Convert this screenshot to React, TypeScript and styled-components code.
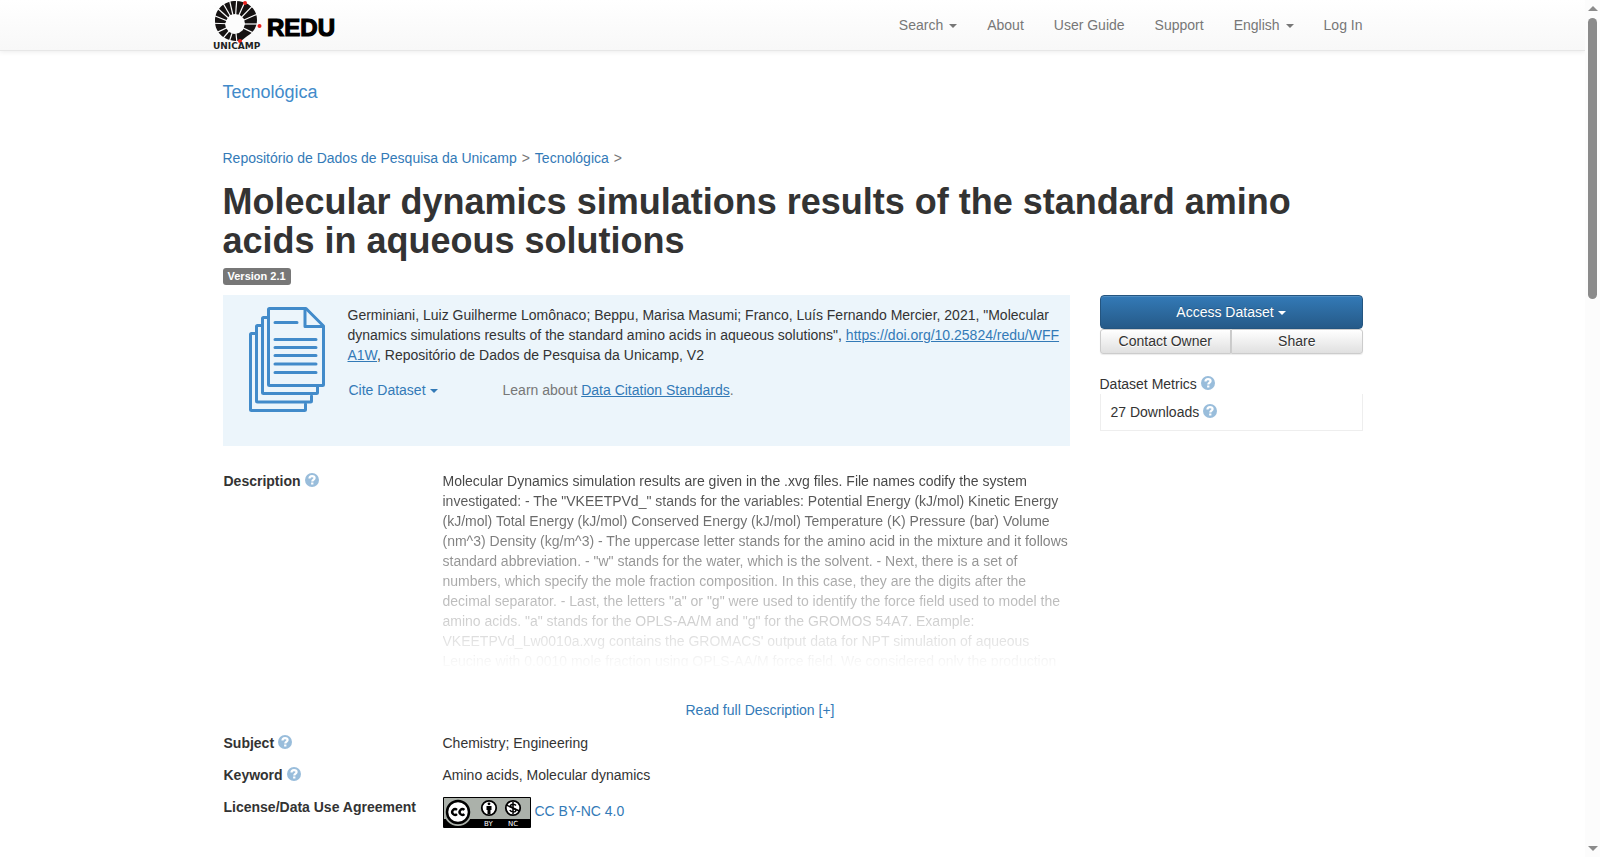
import React from "react";
import styled, { createGlobalStyle, css } from "styled-components";

const GlobalStyle = createGlobalStyle`
  *, *::before, *::after { box-sizing: border-box; }
  html, body { margin: 0; padding: 0; }
  html { overflow: hidden; height: 100%; }
  body {
    font-family: "Liberation Sans", Arial, sans-serif;
    font-size: 14px;
    line-height: 20px;
    color: #333;
    background: #fff;
  }
  button { font: inherit; color: inherit; cursor: pointer; }
`;

const Shell = styled.div`
  display: grid;
  grid-template-columns: minmax(0, 1fr) 15px;
  height: 100vh;
  overflow: hidden;
`;

const Page = styled.div`
  min-width: 0;
`;

const Track = styled.div`
  display: flex;
  flex-direction: column;
  align-items: center;
  background: #fcfcfc;
  padding: 6px 0;
`;

const Thumb = styled.div`
  width: 9px;
  flex: 0 0 281px;
  margin-top: 7px;
  border-radius: 5px;
  background: #8b8b8b;
`;

const Arrow = styled.span<{ $down?: boolean }>`
  border-left: 5px solid transparent;
  border-right: 5px solid transparent;
  ${(p) =>
    p.$down
      ? css`
          margin-top: auto;
          border-top: 5px solid #8b8b8b;
        `
      : css`
          border-bottom: 5px solid #8b8b8b;
        `}
`;

const Header = styled.header`
  height: 51px;
  background: linear-gradient(#fff, #f8f8f8);
  border-bottom: 1px solid #e7e7e7;
  box-shadow: 0 1px 5px rgba(0, 0, 0, 0.08);
`;

const Container = styled.div`
  max-width: 1170px;
  margin: 0 auto;
`;

const NavRow = styled(Container)`
  display: flex;
  justify-content: space-between;
  height: 50px;
`;

const Brand = styled.a`
  display: block;
  padding-left: 5px;
  height: 50px;
`;

const NavList = styled.nav`
  display: flex;
`;

const navItem = css`
  padding: 15px;
  border: 0;
  background: none;
  color: #777;
  text-decoration: none;
  line-height: 20px;
`;

const NavLink = styled.a`
  ${navItem}
`;

const NavButton = styled.button`
  ${navItem}
`;

const Caret = styled.span<{ $tight?: boolean }>`
  display: inline-block;
  margin-left: ${(p) => (p.$tight ? 4 : 6)}px;
  vertical-align: middle;
  border-top: 4px solid currentColor;
  border-left: 4px solid transparent;
  border-right: 4px solid transparent;
`;

const Main = styled(Container).attrs({ as: "main" })`
  padding: 0 15px;
`;

const Link = styled.a<{ $underline?: boolean }>`
  color: #337ab7;
  text-decoration: ${(p) => (p.$underline ? "underline" : "none")};
`;

const Collection = styled.a`
  display: block;
  margin-top: 31px;
  font-size: 18px;
  color: #428bca;
  text-decoration: none;
`;

const Breadcrumb = styled.nav`
  display: flex;
  gap: 5px;
  margin-top: 46px;
  color: #777;
`;

const Title = styled.h1`
  margin: 14px 0 0;
  font-size: 36px;
  line-height: 39px;
  font-weight: bold;
`;

const VersionLabel = styled.span`
  display: block;
  width: fit-content;
  margin-top: 8px;
  padding: 0 5px;
  border-radius: 3px;
  background: #777;
  color: #fff;
  font-size: 11px;
  line-height: 17px;
  font-weight: bold;
`;

const Columns = styled.div`
  display: grid;
  grid-template-columns: minmax(0, 1fr) 263px;
  gap: 30px;
  margin-top: 10px;
`;

const Citation = styled.section`
  display: grid;
  grid-template-columns: 76px minmax(0, 1fr);
  gap: 23px;
  min-height: 151px;
  padding: 10px 10px 0 26px;
  background: #ecf5fb;

  > svg {
    margin-top: 2px;
  }
`;

const CitationText = styled.p`
  margin: 0;

  a {
    word-break: break-all;
  }
`;

const CitationActions = styled.div`
  display: flex;
  gap: 65px;
  margin-top: 15px;
  color: #777;
`;

const LinkButton = styled.button`
  padding: 0 0 0 1px;
  border: 0;
  background: none;
  color: #337ab7;
`;

const Actions = styled.div`
  display: flex;
  flex-wrap: wrap;
`;

const AccessButton = styled.button`
  flex: 0 0 100%;
  height: 34px;
  border: 1px solid #245580;
  border-radius: 4px;
  background: linear-gradient(#337ab7, #265a88);
  color: #fff;
  text-shadow: 0 -1px 0 rgba(0, 0, 0, 0.2);
  box-shadow: inset 0 1px 0 rgba(255, 255, 255, 0.15);
`;

const SmallButton = styled.button<{ $side: "left" | "right" }>`
  flex: 1;
  height: 25px;
  padding: 0 0 2px;
  border: 1px solid #ccc;
  border-radius: ${(p) => (p.$side === "left" ? "3px 0 0 3px" : "0 3px 3px 0")};
  background: linear-gradient(#fff, #e0e0e0);
  text-shadow: 0 1px 0 #fff;
  box-shadow: 0 1px 1px rgba(0, 0, 0, 0.08);
`;

const MetricsTitle = styled.div`
  margin-top: 20px;
`;

const MetricsBody = styled.div`
  padding: 8px 10px;
  border: 1px solid #eee;
  border-top: 0;
`;

const HelpSvg = styled.svg`
  margin-left: 4px;
  vertical-align: -1px;
`;

const Fields = styled.dl`
  display: grid;
  grid-template-columns: 190px minmax(0, 1fr);
  column-gap: 30px;
  row-gap: 12px;
  margin: 25px 0 0;
`;

const Term = styled.dt`
  padding-left: 1px;
  font-weight: bold;
  white-space: nowrap;
`;

const Detail = styled.dd`
  margin: 0;
`;

const Faded = styled.div`
  height: 195px;
  overflow: hidden;
  mask-image: linear-gradient(rgba(0, 0, 0, 0.95), rgba(0, 0, 0, 0.02));
`;

const ReadMore = styled.button`
  display: block;
  margin: 34px auto 1px;
  padding: 0 0 0 8px;
  border: 0;
  background: none;
  color: #337ab7;
`;

const LicenseRow = styled(Detail)`
  display: flex;
  gap: 4px;
  line-height: 28px;
`;

function HelpIcon() {
  return (
    <HelpSvg width="14" height="14" viewBox="0 0 14 14" role="img" aria-label="Help">
      <circle cx="7" cy="7" r="7" fill="#99bddb" />
      <path d="M4.500 5.600C4.500 3.900 5.600 3.200 7 3.200S9.600 3.900 9.600 5.100C9.600 6.600 7.300 6.600 7.300 8.600" fill="none" stroke="#fff" strokeWidth="2.200" />
      <path d="M6.100 9.500h2.300v2H6.100z" fill="#fff" />
    </HelpSvg>
  );
}

const spokes = [-178, -158, -138, -120, -103, -86, -66, -46, -24, 0, 26, 84, 108, 130, 155];

function Logo() {
  return (
    <svg width="124" height="50" viewBox="0 0 124 50" role="img" aria-label="Unicamp REDU">
      <path d="M23 1C35 1 44 9 44 20C44 29 38 34 33 37L28 41C13 42 2 34 2 21C2 9 11 1 23 1z" fill="#151212" />
      <g stroke="#fcfcfc" strokeWidth="1.200">
        {spokes.map((a) => (
          <path key={a} d="M22 24h28" transform={`rotate(${a} 22 24)`} />
        ))}
      </g>
      <path d="M22 14l5 1 4 4 1 5-2 6-4 3-5 1-5-2-3-4-1-4 2-5 3-4z" fill="#fcfcfc" />
      <g fill="#e8201e">
        <circle cx="32" cy="3" r="2" />
        <circle cx="46.500" cy="26" r="2" />
        <circle cx="27" cy="41" r="2" />
      </g>
      <text x="0" y="49" fontFamily="DejaVu Sans, sans-serif" fontWeight="bold" fontSize="9" fill="#222">
        UNICAMP
      </text>
      <text x="54" y="36" fontFamily="Liberation Sans, Arial, sans-serif" fontWeight="bold" fontSize="24" fill="#000" stroke="#000" strokeWidth="1.200">
        REDU
      </text>
    </svg>
  );
}

function DocumentsIcon() {
  return (
    <svg width="76" height="105" viewBox="0 0 76 105" fill="none" stroke="#428bca" strokeWidth="3" strokeLinecap="round" strokeLinejoin="round" aria-hidden="true">
      <path d="M7 26.500H2.500q-1 0-1 1V102.500q0 1 1 1H55.500q1 0 1-1V97" />
      <path d="M13 18.500H8.500q-1 0-1 1V94q0 1 1 1H61.500q1 0 1-1V89" />
      <path d="M19 10.500H14.500q-1 0-1 1V85.500q0 1 1 1H67.500q1 0 1-1V80" />
      <path d="M20.500 1.500H57L74.500 19V77.500q0 1-1 1H20.500q-1 0-1-1V2.500q0-1 1-1z" />
      <path d="M56 2V19.500H74" strokeLinecap="butt" />
      <path d="M26 15.500H48M26 32.500H67M26 40.500H67M26 48.500H67M26 57H67M26 65.500H67" />
    </svg>
  );
}

function LicenseBadge() {
  return (
    <svg width="88" height="31" viewBox="0 0 88 31" role="img" aria-label="CC BY-NC">
      <rect width="88" height="31" rx="1" fill="#000" />
      <path d="M1 1h86v21H1z" fill="#abb1aa" />
      <path d="M1 22h1q4 6 12 7h5q6-2 9-7H1z" fill="#000" />
      <circle cx="15" cy="15" r="14" fill="#abb1aa" />
      <circle cx="15" cy="15" r="11" fill="#fff" stroke="#000" strokeWidth="2.500" />
      <g fill="none" stroke="#000" strokeWidth="2.400">
        <path d="M14 12.800a2.900 2.900 0 1 0 0 4.400M21.400 12.800a2.900 2.900 0 1 0 0 4.400" />
      </g>
      <circle cx="46" cy="11" r="7.200" fill="#fff" stroke="#000" strokeWidth="1.800" />
      <circle cx="46" cy="6.800" r="1.400" fill="#000" />
      <path d="M43.500 9h5v4h-1v4h-3v-4h-1z" fill="#000" />
      <circle cx="70" cy="11" r="7.200" fill="#fff" stroke="#000" strokeWidth="1.800" />
      <path d="M73 8.500C72 7 67.500 6.600 67.500 9S73 11 73 13.300 68 15.300 66.800 13M70 5v12" fill="none" stroke="#000" strokeWidth="1.500" />
      <path d="M63.500 8.200L76.500 14" stroke="#000" strokeWidth="1.400" />
      <g fill="#fff" fontFamily="DejaVu Sans, sans-serif" fontSize="7">
        <text x="41" y="29">BY</text>
        <text x="65" y="29">NC</text>
      </g>
    </svg>
  );
}

export default function App() {
  return (
    <Shell>
      <GlobalStyle />
      <Page>
        <Header>
          <NavRow>
            <Brand href="#">
              <Logo />
            </Brand>
            <NavList>
              <NavButton type="button">Search<Caret /></NavButton>
              <NavLink href="#">About</NavLink>
              <NavLink href="#">User Guide</NavLink>
              <NavLink href="#">Support</NavLink>
              <NavButton type="button">English<Caret /></NavButton>
              <NavLink href="#">Log In</NavLink>
            </NavList>
          </NavRow>
        </Header>
        <Main>
          <Collection href="#">Tecnológica</Collection>
          <Breadcrumb>
            <Link href="#">Repositório de Dados de Pesquisa da Unicamp</Link>
            <span>&gt;</span>
            <Link href="#">Tecnológica</Link>
            <span>&gt;</span>
          </Breadcrumb>
          <Title>Molecular dynamics simulations results of the standard amino acids in aqueous solutions</Title>
          <VersionLabel>Version 2.1</VersionLabel>
          <Columns>
            <div>
              <Citation>
                <DocumentsIcon />
                <div>
                  <CitationText>
                    Germiniani, Luiz Guilherme Lomônaco; Beppu, Marisa Masumi; Franco, Luís Fernando Mercier, 2021,
                    "Molecular dynamics simulations results of the standard amino acids in aqueous solutions",{" "}
                    <Link $underline href="#">https://doi.org/10.25824/redu/WFFA1W</Link>, Repositório de Dados de
                    Pesquisa da Unicamp, V2
                  </CitationText>
                  <CitationActions>
                    <LinkButton type="button">Cite Dataset<Caret $tight /></LinkButton>
                    <span>
                      Learn about <Link $underline href="#">Data Citation Standards</Link>.
                    </span>
                  </CitationActions>
                </div>
              </Citation>
              <Fields>
                <Term>Description<HelpIcon /></Term>
                <Detail>
                  <Faded>
                    Molecular Dynamics simulation results are given in the .xvg files. File names codify the system
                    investigated: - The "VKEETPVd_" stands for the variables: Potential Energy (kJ/mol) Kinetic Energy
                    (kJ/mol) Total Energy (kJ/mol) Conserved Energy (kJ/mol) Temperature (K) Pressure (bar) Volume
                    (nm^3) Density (kg/m^3) - The uppercase letter stands for the amino acid in the mixture and it
                    follows standard abbreviation. - "w" stands for the water, which is the solvent. - Next, there is a
                    set of numbers, which specify the mole fraction composition. In this case, they are the digits after
                    the decimal separator. - Last, the letters "a" or "g" were used to identify the force field used to
                    model the amino acids. "a" stands for the OPLS-AA/M and "g" for the GROMOS 54A7. Example:
                    VKEETPVd_Lw0010a.xvg contains the GROMACS' output data for NPT simulation of aqueous Leucine with
                    0.0010 mole fraction using OPLS-AA/M force field. We considered only the production
                  </Faded>
                  <ReadMore type="button">Read full Description [+]</ReadMore>
                </Detail>
                <Term>Subject<HelpIcon /></Term>
                <Detail>Chemistry; Engineering</Detail>
                <Term>Keyword<HelpIcon /></Term>
                <Detail>Amino acids, Molecular dynamics</Detail>
                <Term>License/Data Use Agreement</Term>
                <LicenseRow>
                  <LicenseBadge />
                  <Link href="#">CC BY-NC 4.0</Link>
                </LicenseRow>
              </Fields>
            </div>
            <aside>
              <Actions>
                <AccessButton type="button">Access Dataset<Caret $tight /></AccessButton>
                <SmallButton type="button" $side="left">Contact Owner</SmallButton>
                <SmallButton type="button" $side="right">Share</SmallButton>
              </Actions>
              <MetricsTitle>Dataset Metrics<HelpIcon /></MetricsTitle>
              <MetricsBody>27 Downloads<HelpIcon /></MetricsBody>
            </aside>
          </Columns>
        </Main>
      </Page>
      <Track aria-hidden="true">
        <Arrow />
        <Thumb />
        <Arrow $down />
      </Track>
    </Shell>
  );
}
